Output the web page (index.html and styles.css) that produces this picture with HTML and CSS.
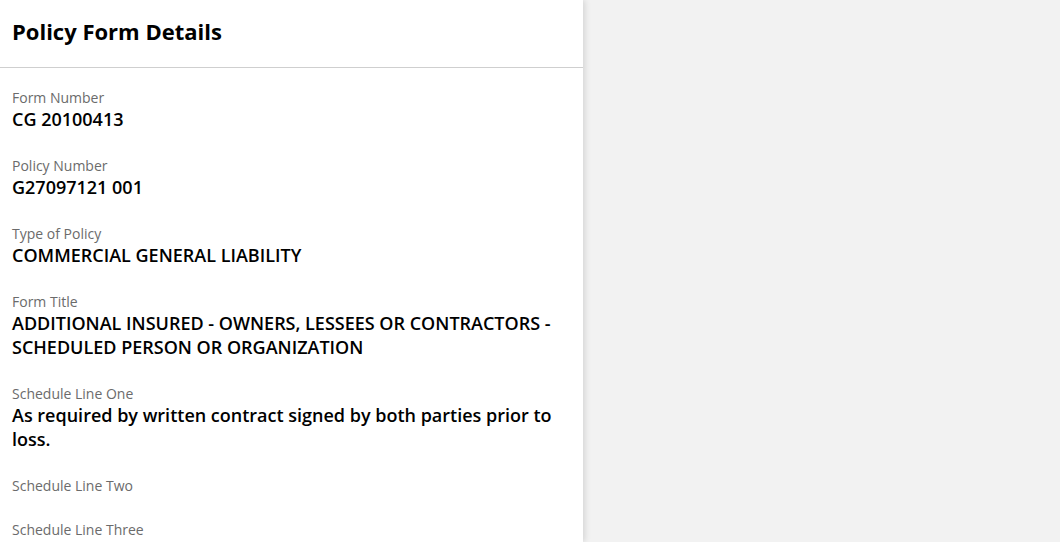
FILE: index.html
```html
<!DOCTYPE html>
<html lang="en">
<head>
<meta charset="utf-8">
<title>Policy Form Details</title>
<link rel="stylesheet" href="styles.css">
</head>
<body>
<div class="layout">
  <aside class="panel">
    <header class="panel-header">
      <h1 class="panel-title">Policy Form Details</h1>
    </header>
    <div class="panel-body">
      <div class="field">
        <div class="field-label">Form Number</div>
        <div class="field-value">CG 20100413</div>
      </div>
      <div class="field">
        <div class="field-label">Policy Number</div>
        <div class="field-value">G27097121 001</div>
      </div>
      <div class="field">
        <div class="field-label">Type of Policy</div>
        <div class="field-value">COMMERCIAL GENERAL LIABILITY</div>
      </div>
      <div class="field">
        <div class="field-label">Form Title</div>
        <div class="field-value">ADDITIONAL INSURED - OWNERS, LESSEES OR CONTRACTORS - SCHEDULED PERSON OR ORGANIZATION</div>
      </div>
      <div class="field">
        <div class="field-label">Schedule Line One</div>
        <div class="field-value">As required by written contract signed by both parties prior to loss.</div>
      </div>
      <div class="field">
        <div class="field-label">Schedule Line Two</div>
        <div class="field-value"></div>
      </div>
      <div class="field">
        <div class="field-label">Schedule Line Three</div>
        <div class="field-value"></div>
      </div>
    </div>
  </aside>
  <main class="backdrop"></main>
</div>
</body>
</html>
```
FILE: styles.css
```css
* { box-sizing: border-box; }
html, body {
  margin: 0;
  padding: 0;
  height: 100%;
}
body {
  font-family: "Open Sans", "Liberation Sans", Arial, sans-serif;
  background: #f2f2f2;
  color: #000;
}
.layout {
  display: flex;
  height: 100vh;
  overflow: hidden;
}
.panel {
  width: 583px;
  flex: 0 0 583px;
  background: #fff;
  box-shadow: 2px 0 6px rgba(0, 0, 0, 0.12);
  position: relative;
  z-index: 1;
  overflow: hidden;
}
.panel-header {
  height: 68px;
  border-bottom: 1px solid #cfcfcf;
  display: flex;
  align-items: center;
  padding: 0 12px 6px;
}
.panel-title {
  margin: 0;
  font-size: 22px;
  font-weight: 700;
  line-height: 30px;
}
.panel-body {
  padding: 20px 12px 0;
  display: flex;
  flex-direction: column;
  gap: 25px;
}
.field-label {
  font-size: 14px;
  line-height: 19px;
  color: #6b6b6b;
}
.field-value {
  font-size: 18px;
  font-weight: 600;
  line-height: 24px;
  color: #000;
}
.backdrop {
  flex: 1;
  background: #f2f2f2;
}
```
